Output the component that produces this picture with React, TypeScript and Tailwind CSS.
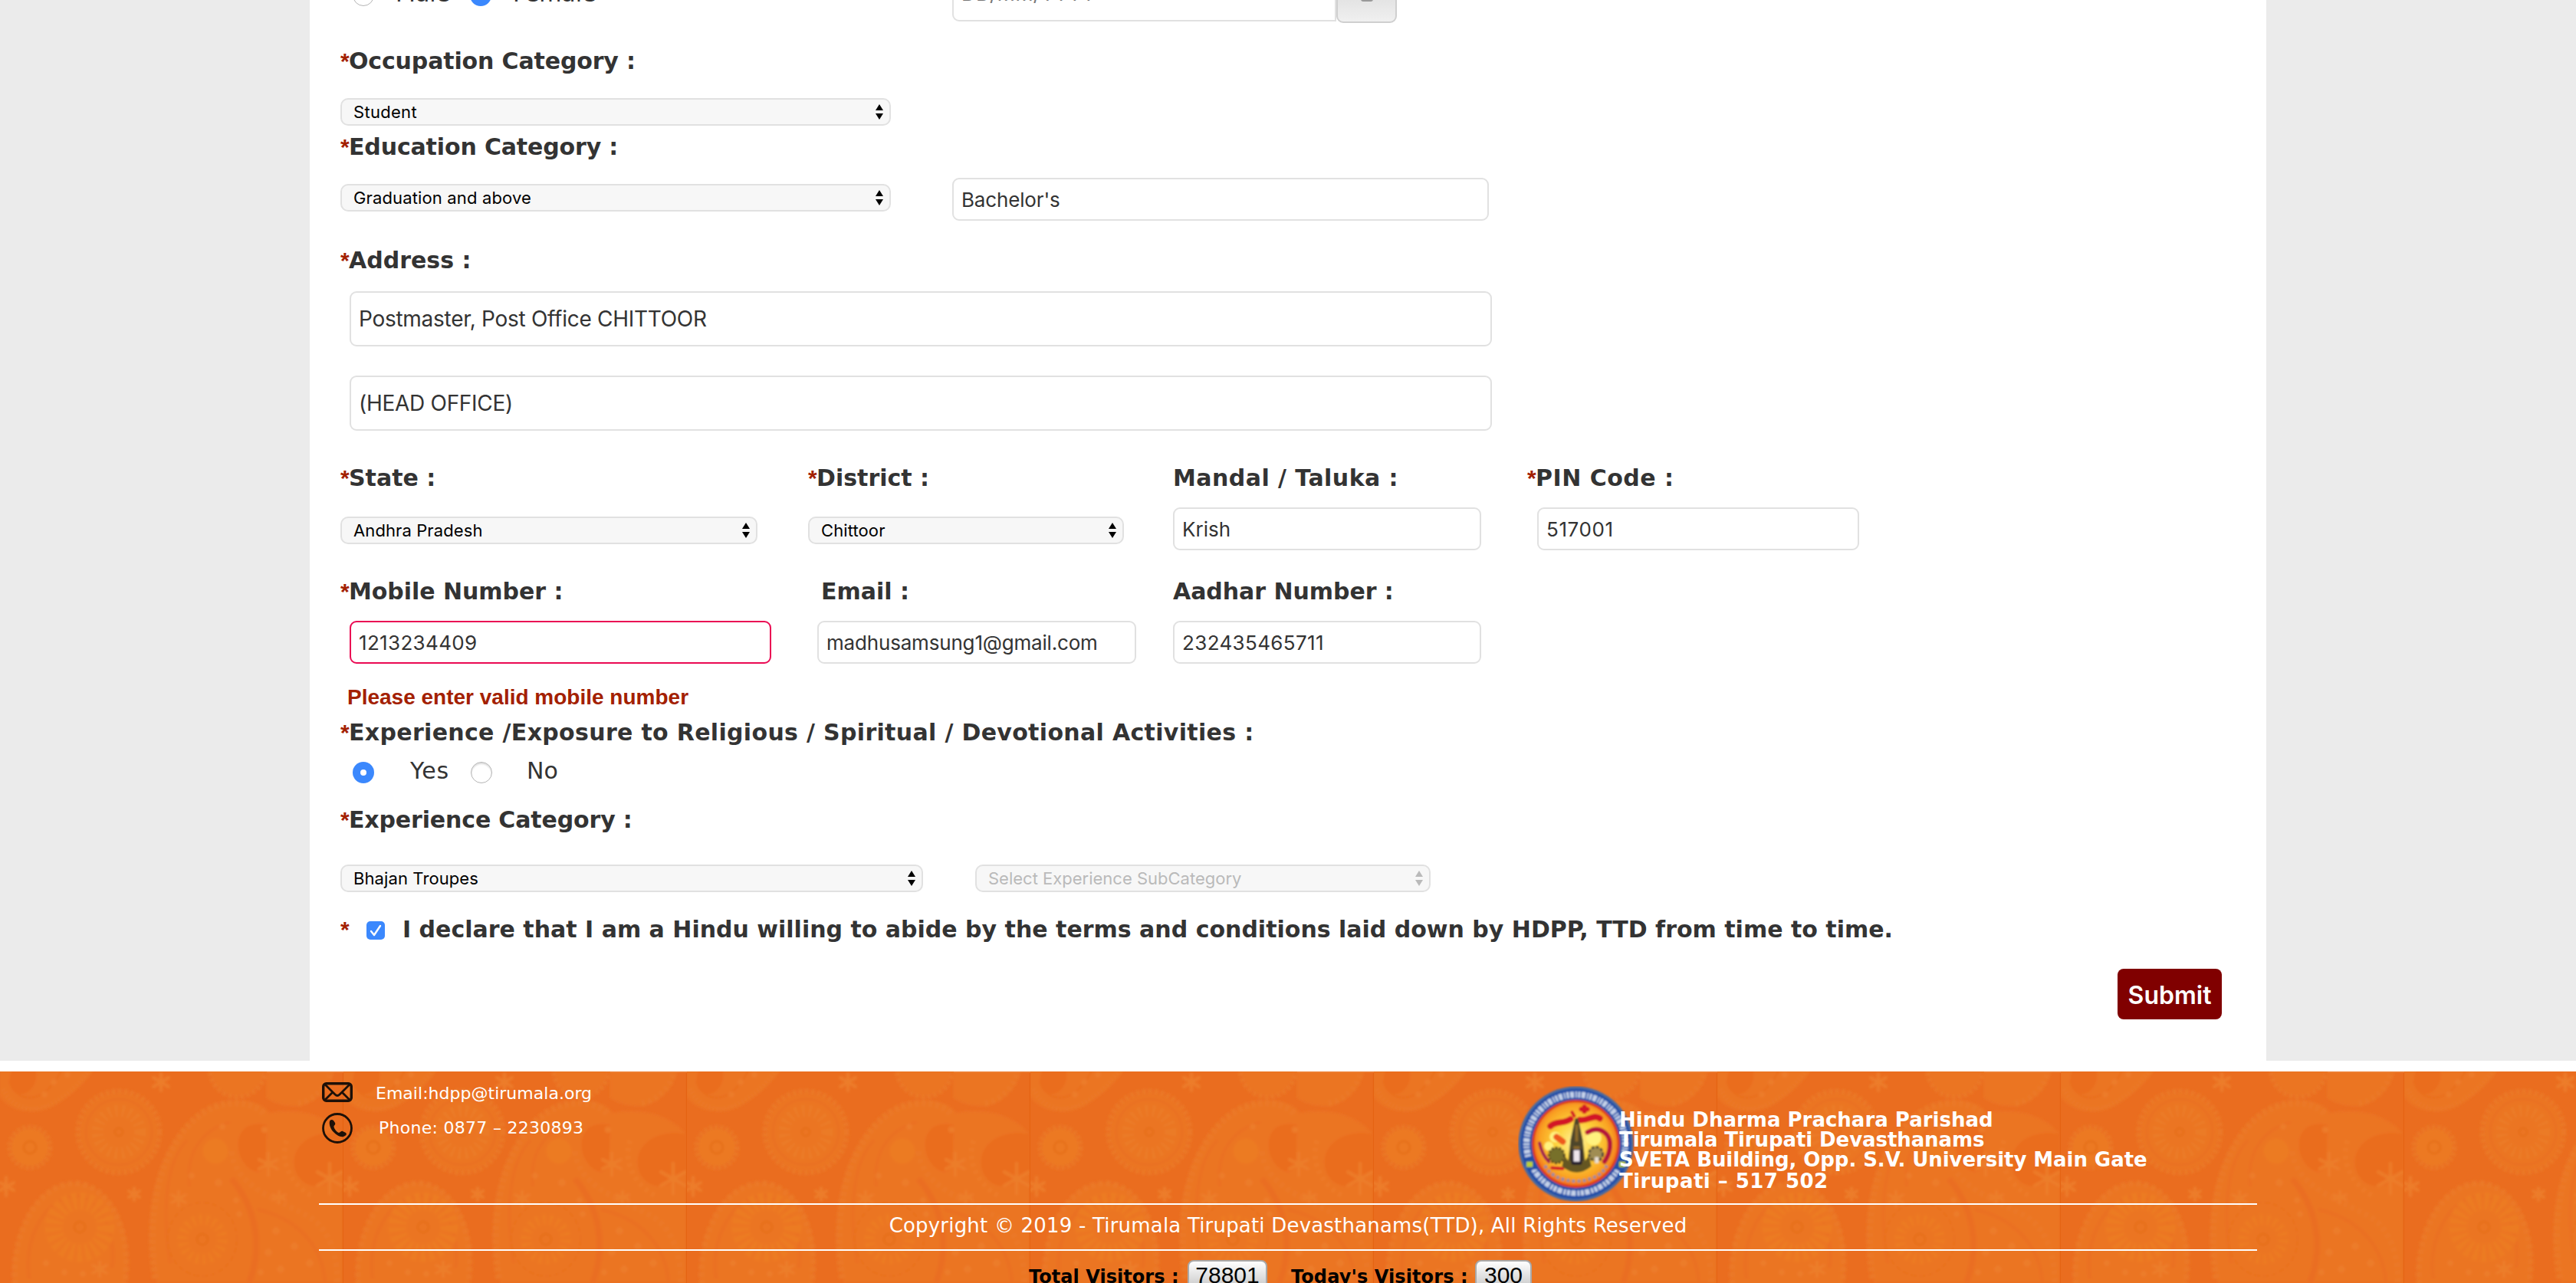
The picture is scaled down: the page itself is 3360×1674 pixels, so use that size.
import type { ReactNode } from 'react';

const labelFont = "font-['DejaVu_Sans',sans-serif]";

function Label({ children, required = false, className = '' }: { children: ReactNode; required?: boolean; className?: string }) {
  return (
    <div className={`${labelFont} flex h-9 items-start whitespace-nowrap text-[30px] leading-9 font-bold text-[#333] ${className}`}>
      {required && <Star />}
      <span>{children}</span>
    </div>
  );
}

function Star() {
  return <span className="w-[11px] shrink-0 font-['Liberation_Sans',sans-serif] text-[30px] leading-9 font-bold text-[#a32000]">*</span>;
}

function SelectBox({ children, disabled = false, className = '' }: { children: ReactNode; disabled?: boolean; className?: string }) {
  return (
    <div
      className={`flex h-9 items-center justify-between rounded-[10px] border-2 border-[#e1e1e1] bg-[#f7f7f7] pr-2 pl-[15px] font-[Inter,sans-serif] text-[22px] leading-none whitespace-nowrap ${disabled ? 'text-[#bababa]' : 'text-black'} ${className}`}
    >
      <span>{children}</span>
      <svg className="h-5 w-[10px]" viewBox="0 0 10 20" fill="currentColor">
        <path d="M5 0L10 8H0zM0 12h10L5 20z" />
      </svg>
    </div>
  );
}

function TextBox({ children, invalid = false, tall = false, className = '' }: { children: ReactNode; invalid?: boolean; tall?: boolean; className?: string }) {
  return (
    <div
      className={`flex items-center rounded-[9px] border-2 bg-white pl-[10px] font-[Inter,sans-serif] whitespace-nowrap text-[#333] ${tall ? 'h-[72px] text-[28px]' : 'h-14 text-[26px]'} ${invalid ? 'border-[#ea0a53]' : 'border-[#e1e1e1]'} ${className}`}
    >
      <span>{children}</span>
    </div>
  );
}

function Radio({ checked = false }: { checked?: boolean }) {
  return checked ? (
    <span className="mt-[6px] flex size-7 shrink-0 items-center justify-center rounded-full bg-[#3b88fd]">
      <span className="size-2 rounded-full bg-white" />
    </span>
  ) : (
    <span className="mt-[6px] size-7 shrink-0 rounded-full border border-[#b4b4b4] bg-white shadow-[inset_0_2px_2px_#ddd]" />
  );
}

function PaisleyBackground() {
  return (
    <svg className="absolute inset-0 h-full w-full" aria-hidden="true">
      <defs>
        <filter id="soft" x="0" y="0" width="100%" height="100%">
          <feGaussianBlur stdDeviation="1.8" />
        </filter>
        <pattern id="paisley" width="448" height="276" patternUnits="userSpaceOnUse">
          <rect width="448" height="276" fill="#ea6d1f" />
          <g filter="url(#soft)" stroke="#eb7926" fill="#eb7523" opacity="0.9">
            <g strokeWidth="5">
              <path d="M-2 30C10 52 42 58 70 44C96 30 116 10 126 -8H-2Z" stroke="none" />
              <path d="M4 22C16 50 46 56 72 40C96 26 112 6 120 -8" fill="none" strokeWidth="7" strokeDasharray="3 2" />
              <path d="M12 12C22 38 44 40 62 24C74 12 80 0 82 -8" fill="none" stroke="#e9701f" strokeWidth="3" />
              <ellipse cx="30" cy="8" rx="17" ry="22" transform="rotate(18 30 8)" fill="#ea6d1f" stroke="none" />
            </g>
            <circle cx="155" cy="79" r="51" stroke="none" />
            <circle cx="155" cy="79" r="53" fill="none" strokeWidth="7" strokeDasharray="5 3" />
            <circle cx="155" cy="79" r="43" fill="none" stroke="#e9701f" strokeWidth="2" />
            <circle cx="155" cy="79" r="28" fill="none" stroke="#eb7c25" strokeWidth="16" strokeDasharray="5 4" />
            <circle cx="155" cy="79" r="5" fill="none" stroke="#e67018" strokeWidth="3" />
            <circle cx="39" cy="99" r="24" stroke="none" fill="#ec7a22" />
            <circle cx="39" cy="99" r="26" fill="none" strokeWidth="7" strokeDasharray="4 3" />
            <circle cx="39" cy="99" r="8" fill="none" stroke="#e67018" strokeWidth="3" />
            <circle cx="310" cy="-3" r="34" />
            <circle cx="310" cy="-3" r="36" fill="none" strokeWidth="6" strokeDasharray="5 3" />
            <path d="M348 -6H436C432 18 416 38 392 44C372 46 356 40 348 34Z" />
            <path d="M430 4C424 24 408 38 388 42" fill="none" strokeWidth="8" strokeDasharray="5 4" />
            <path d="M205 276C184 200 196 98 268 52C300 32 336 34 352 54C390 46 430 58 448 84V276Z" stroke="none" />
            <path d="M203 270C190 190 206 98 262 56C290 36 330 36 346 58" fill="none" strokeWidth="9" strokeDasharray="6 3" />
            <path d="M247 150C242 108 262 76 300 66" fill="none" stroke="#ea6f20" strokeWidth="3" />
            <path d="M222 250C212 190 214 120 244 90" fill="none" stroke="#ea6f20" strokeWidth="3" />
            <path d="M348 70C316 62 304 88 314 112C324 132 340 136 346 124Z" fill="#ea6d1f" stroke="none" />
            <path d="M448 82C420 76 390 86 384 112C380 138 402 156 424 148L448 128Z" fill="#ea6d1f" stroke="none" />
            <path d="M302 104C306 150 360 166 404 190C430 206 440 240 440 276" fill="none" strokeWidth="8" strokeDasharray="6 4" />
            <path d="M325 276C344 224 332 176 302 140" fill="none" stroke="#ea6e20" strokeWidth="8" />
            <path d="M336 180C380 190 420 220 424 276" fill="none" stroke="#ea6f20" strokeWidth="4" />
            <path d="M374 90C366 112 374 146 410 164" fill="none" stroke="#ec7b27" strokeWidth="7" strokeDasharray="5 5" />
            <circle cx="281" cy="104" r="17" fill="#ec7b21" stroke="none" />
            <ellipse cx="264" cy="219" rx="45" ry="48" fill="none" stroke="#e9721f" strokeWidth="3" strokeDasharray="8 3" />
            <circle cx="264" cy="219" r="26" fill="none" stroke="#ec7c22" strokeWidth="14" strokeDasharray="5 4" />
            <circle cx="264" cy="219" r="7" fill="none" stroke="#e67018" strokeWidth="3" />
            <path d="M18 280C14 226 38 146 98 146C154 150 174 222 162 280Z" />
            <path d="M20 278C14 224 42 148 98 146C150 150 172 220 162 278" fill="none" strokeWidth="8" strokeDasharray="6 4" />
            <path d="M38 270C30 220 58 164 100 162C136 168 152 220 146 256" fill="none" stroke="#ea6f20" strokeWidth="4" />
            <circle cx="104" cy="203" r="34" fill="none" stroke="#ec7b23" strokeWidth="24" strokeDasharray="7 3" />
            <circle cx="104" cy="203" r="7" fill="none" stroke="#e67018" strokeWidth="3" />
            <g fill="none" stroke="#ed7e2a" strokeWidth="4" strokeLinecap="round">
              <path d="M210 3V25M200 8L220 20M200 20L220 8" />
              <path d="M8 138V162M0 145L18 155M0 155L18 145" />
              <path d="M175 152V168M168 156L182 164M168 164L182 156" />
              <path d="M430 120V160M414 131L446 149M414 149L446 131" />
              <path d="M350 106V136M338 115L362 127M338 127L362 115" />
              <path d="M233 156V176M224 161L242 171M224 171L242 161" />
              <path d="M364 156V172M356 161L372 167M356 167L372 161" />
              <path d="M130 248V268M121 253L139 263M121 263L139 253" />
            </g>
            <g fill="#ec7d29" stroke="none">
              <circle cx="285" cy="145" r="5" /><circle cx="308" cy="168" r="4" /><circle cx="290" cy="72" r="4" />
              <circle cx="345" cy="76" r="4" /><circle cx="312" cy="186" r="4" /><circle cx="250" cy="136" r="4" />
              <circle cx="360" cy="208" r="5" /><circle cx="384" cy="228" r="5" /><circle cx="350" cy="236" r="5" />
              <circle cx="404" cy="250" r="5" /><circle cx="366" cy="258" r="5" /><circle cx="340" cy="262" r="4" />
              <circle cx="70" cy="14" r="4" /><circle cx="58" cy="30" r="4" /><circle cx="88" cy="4" r="4" />
              <circle cx="60" cy="250" r="4" /><circle cx="84" cy="262" r="4" /><circle cx="108" cy="264" r="4" />
            </g>
          </g>
          <path d="M447.5 2V276" stroke="#e4600f" strokeWidth="1.5" opacity="0.8" />
          <path d="M348 0H448" stroke="#ee8a45" strokeWidth="3" opacity="0.6" />
        </pattern>
      </defs>
      <rect width="100%" height="100%" fill="url(#paisley)" />
    </svg>
  );
}

function MailIcon() {
  return (
    <svg className="h-[26px] w-10 shrink-0" viewBox="0 0 40 26" fill="none" stroke="#1d1008" strokeWidth="3.4" strokeLinejoin="round">
      <rect x="1.7" y="1.7" width="36.6" height="22.6" rx="4" />
      <path d="M4 3L17 16Q20 19 23 16L36 3M4 23L14 13M36 23L26 13" strokeWidth="2.8" />
    </svg>
  );
}

function PhoneIcon() {
  return (
    <svg className="size-10 shrink-0" viewBox="0 0 40 40">
      <circle cx="20" cy="20" r="18.5" fill="none" stroke="#1d1008" strokeWidth="2.8" />
      <path
        d="M10 11C9 15 11 21 15 25C19 29 24 32 28 31C31 30 33 28 31 26L27 24C25 23 24 26 22 26C19 25 16 21 15.500 18C15.500 16 18 16 17 13L15 10C13 8 10.500 9 10 11Z"
        fill="#1d1008"
      />
    </svg>
  );
}

function Emblem() {
  return (
    <svg className="size-[151px] shrink-0" viewBox="0 0 150 150">
      <defs>
        <radialGradient id="glow" cx="50%" cy="48%" r="55%">
          <stop offset="0" stopColor="#fff3a0" />
          <stop offset="0.45" stopColor="#fdd23a" />
          <stop offset="0.8" stopColor="#f9a022" />
          <stop offset="1" stopColor="#ee5a1c" />
        </radialGradient>
        <filter id="emblemSoft">
          <feGaussianBlur stdDeviation="0.9" />
        </filter>
      </defs>
      <g filter="url(#emblemSoft)">
        <circle cx="75" cy="75" r="74.500" fill="#4a6aa2" />
        <circle cx="75" cy="75" r="71.500" fill="#2450a8" />
        <path d="M13.200 91.700A64 64 0 1 1 136.800 91.700" fill="none" stroke="#c3d0e8" strokeWidth="8" strokeDasharray="3 1.500 5 2 2 1.500" />
        <path d="M20.200 108A64 64 0 0 0 129.800 108" fill="none" stroke="#c3d0e8" strokeWidth="7" strokeDasharray="4 1.500 6 2 3 1.500" />
        <path d="M8 94L24 94L26 108H12Z M142 94L126 94L124 108H138Z" fill="#2450a8" />
        <rect x="11" y="98" width="8" height="7" fill="#b9cf3a" />
        <rect x="131" y="98" width="8" height="7" fill="#b9cf3a" />
        <circle cx="75" cy="75" r="57" fill="#dc3a1e" />
        <circle cx="75" cy="75" r="54" fill="url(#glow)" />
        <g fill="#fff27e">
          <circle cx="98" cy="67" r="10" />
          <circle cx="48" cy="66" r="7" />
          <circle cx="40" cy="78" r="6" />
        </g>
        <g fill="none" stroke="#d31426" strokeLinecap="round">
          <path d="M42 52C50 44 58 50 68 43" strokeWidth="8" />
          <path d="M80 44C90 46 98 36 106 42" strokeWidth="8" />
          <path d="M82 30H90M86 27V33" strokeWidth="6" />
          <path d="M70 34L73 39" strokeWidth="4" />
          <path d="M90 60C106 50 121 62 119 80C118 88 115 94 112 98" stroke="#b5173a" strokeWidth="6" />
          <path d="M50 66L58 72" stroke="#ee5a1c" strokeWidth="8" />
          <path d="M28 74C30 84 34 92 40 98" stroke="#a01c50" strokeWidth="4" />
          <path d="M44 106L58 107" strokeWidth="4" />
        </g>
        <path d="M35 103C48 130 102 130 115 103" fill="none" stroke="#9a8ba0" strokeWidth="4" strokeDasharray="4 3" />
        <path d="M74 42H78L84 70L87 98H65L68 70Z" fill="#4d452c" />
        <path d="M76 50V72M72 80H80" stroke="#8d6a2c" strokeWidth="4" />
        <path d="M60 90L66 98H86L92 90L95 104Q76 120 57 104Z" fill="#655722" />
        <circle cx="50" cy="90" r="10" fill="#77702a" stroke="#5a4a24" strokeWidth="3" strokeDasharray="3 2" />
        <circle cx="101" cy="88" r="9" fill="#a08d52" stroke="#4d4638" strokeWidth="3" strokeDasharray="4 2" />
        <path d="M102 92V100" stroke="#e9e0d4" strokeWidth="5" />
        <rect x="69" y="82" width="14" height="20" rx="3" fill="#221c2c" />
        <path d="M72 83H80V98H72Z" fill="#eee6ec" />
      </g>
    </svg>
  );
}

function Counter({ children, className = '' }: { children: ReactNode; className?: string }) {
  return (
    <span
      className={`flex h-[46px] justify-center rounded-lg border-2 border-[#a9a9a9] bg-linear-to-b from-white to-[#bdbdbd] pt-[3px] font-['Liberation_Sans',sans-serif] text-[30px] leading-[30px] font-normal text-black ${className}`}
    >
      {children}
    </span>
  );
}

export default function App() {
  return (
    <div className="flex h-[1674px] w-[3360px] flex-col overflow-hidden bg-white">
      <div className="flex h-[1384px] shrink-0 justify-center bg-[#ebebeb]">
        <main className="flex h-full w-[2552px] flex-col bg-white pl-10">
          <div className={`flex h-[30px] shrink-0 items-end ${labelFont} text-[30px] leading-9 text-[#333]`}>
            <div className="flex h-14 w-[798px] items-start pl-4">
              <Radio />
              <span className="ml-7">Male</span>
              <span className="ml-[26px] flex">
                <Radio checked />
              </span>
              <span className="ml-7">Female</span>
            </div>
            <div className="flex items-end">
              <div className="mb-[2px] flex h-[72px] w-[501px] items-center rounded-l-[9px] border-2 border-[#e1e1e1] pl-[10px] font-[Inter,sans-serif] text-[26px] tracking-[0.2px] text-[#777]">
                DD/MM/YYYY
              </div>
              <div className="flex h-[60px] w-[79px] items-center justify-center rounded-[9px] border-2 border-[#cfcfcf] bg-linear-to-b from-[#d8d8d8] to-[#f0f0f0]">
                <svg className="size-4" viewBox="0 0 16 16" fill="#999">
                  <rect width="16" height="11" y="-1" rx="3" />
                </svg>
              </div>
            </div>
          </div>

          <Label required className="mt-8 tracking-[-0.150px]">Occupation Category :</Label>
          <SelectBox className="mt-[30px] w-[718px]"><span className="tracking-[0.300px]">Student</span></SelectBox>

          <Label required className="mt-[10px] tracking-[-0.150px]">Education Category :</Label>
          <div className="mt-[22px] flex h-14 items-start">
            <SelectBox className="mt-2 w-[718px]"><span className="tracking-[0.141px]">Graduation and above</span></SelectBox>
            <TextBox className="ml-20 w-[700px] tracking-[-0.160px]">Bachelor&apos;s</TextBox>
          </div>

          <Label required className="mt-[34px]">Address :</Label>
          <TextBox tall className="mt-[22px] ml-3 w-[1490px] tracking-[-0.281px]">Postmaster, Post Office CHITTOOR</TextBox>
          <TextBox tall className="mt-[38px] ml-3 w-[1490px] tracking-[-0.290px]">(HEAD OFFICE)</TextBox>

          <div className="mt-11 grid grid-cols-[610px_476px_462px_1fr]">
            <Label required>State :</Label>
            <Label required>District :</Label>
            <Label className="tracking-[0.450px]">Mandal / Taluka :</Label>
            <Label required className="tracking-[0.500px]">PIN Code :</Label>
          </div>
          <div className="mt-5 grid h-14 grid-cols-[610px_476px_463px_1fr] items-start">
            <SelectBox className="mt-3 w-[544px]"><span className="tracking-[0.100px]">Andhra Pradesh</span></SelectBox>
            <SelectBox className="mt-3 w-[412px]"><span className="tracking-[0.100px]">Chittoor</span></SelectBox>
            <TextBox className="w-[402px]">Krish</TextBox>
            <TextBox className="ml-3 w-[420px] tracking-[0.600px]">517001</TextBox>
          </div>

          <div className="mt-9 grid grid-cols-[610px_476px_462px_1fr]">
            <Label required className="tracking-[-0.050px]">Mobile Number :</Label>
            <Label className="pl-[17px]">Email :</Label>
            <Label className="tracking-[-0.050px]">Aadhar Number :</Label>
          </div>
          <div className="mt-5 grid h-14 grid-cols-[610px_476px_462px_1fr]">
            <TextBox invalid className="ml-3 w-[550px] tracking-[0.336px]">1213234409</TextBox>
            <TextBox className="ml-3 w-[416px] tracking-[-0.180px]">madhusamsung1@gmail.com</TextBox>
            <TextBox className="w-[402px] tracking-[0.360px]">232435465711</TextBox>
          </div>

          <p className="mt-[26px] h-9 pl-[9px] font-['Liberation_Sans',sans-serif] text-[28px] leading-9 font-bold text-[#a32000]">
            Please enter valid mobile number
          </p>

          <Label required className="mt-[10px] tracking-[0.320px]">
            Experience /Exposure to Religious / Spiritual / Devotional Activities :
          </Label>
          <div className={`mt-[14px] flex h-9 items-start pl-4 ${labelFont} text-[30px] leading-9 text-[#333]`}>
            <Radio checked />
            <span className="ml-[47px] w-[79px] tracking-[0.800px]">Yes</span>
            <Radio />
            <span className="ml-[45px]">No</span>
          </div>

          <Label required className="mt-7 tracking-[-0.150px]">Experience Category :</Label>
          <div className="mt-10 flex gap-[68px]">
            <SelectBox className="w-[760px]"><span className="tracking-[0.100px]">Bhajan Troupes</span></SelectBox>
            <SelectBox disabled className="w-[594px]">Select Experience SubCategory</SelectBox>
          </div>

          <div className="mt-[31px] flex h-9 items-start">
            <Star />
            <span className="mt-[7px] ml-[23px] flex size-6 items-center justify-center rounded-[5px] bg-[#3b88fd]">
              <svg className="size-4" viewBox="0 0 16 16" fill="none" stroke="#fff" strokeWidth="2.4" strokeLinecap="round" strokeLinejoin="round">
                <path d="M2 9L6 14L14 2" />
              </svg>
            </span>
            <Label className="ml-[23px]">
              I declare that I am a Hindu willing to abide by the terms and conditions laid down by HDPP, TTD from time to time.
            </Label>
          </div>

          <button
            type="button"
            className="mt-[33px] mr-[58px] flex h-[66px] w-[136px] items-center justify-center self-end rounded-lg bg-[#800000] pt-[4px] font-[Inter,sans-serif] text-[32px] font-semibold text-white"
          >
            Submit
          </button>
        </main>
      </div>

      <footer className={`relative mt-[14px] h-[276px] shrink-0 overflow-hidden ${labelFont}`}>
        <PaisleyBackground />
        <div className="relative mx-[416px]">
          <div className="flex h-[172px] pl-1 text-white">
            <div className="w-[1560px] pt-[14px] text-[22px] leading-7">
              <div className="flex h-10 items-start">
                <MailIcon />
                <span className="mt-px ml-[30px] tracking-[0.020px]">Email:hdpp@tirumala.org</span>
              </div>
              <div className="flex h-10 items-start">
                <PhoneIcon />
                <span className="mt-[6px] ml-[34px] tracking-[0.280px]">Phone: 0877 – 2230893</span>
              </div>
            </div>
            <div className="-mt-px pt-5">
              <Emblem />
            </div>
            <div className="relative -ml-[19px] pt-[50px] text-[26px] leading-[26px] font-bold whitespace-nowrap">
              <p>Hindu Dharma Prachara Parishad</p>
              <p className="tracking-[-0.085px]">Tirumala Tirupati Devasthanams</p>
              <p className="tracking-[-0.061px]">SVETA Building, Opp. S.V. University Main Gate</p>
              <p className="mt-[2px] tracking-[0.466px]">Tirupati – 517 502</p>
            </div>
          </div>
          <div className="flex h-[62px] items-center justify-center border-y-2 border-white pb-1 text-[26px] tracking-[0.195px] whitespace-nowrap text-white">
            Copyright © 2019 - Tirumala Tirupati Devasthanams(TTD), All Rights Reserved
          </div>
          <div className="flex items-start justify-start pt-3 pl-[926px] text-2xl leading-7 font-bold whitespace-nowrap text-black">
            <span className="mt-2 w-[207px] tracking-[0.050px]">Total Visitors :</span>
            <Counter className="w-[104px]">78801</Counter>
            <span className="mt-2 ml-[31px] w-[240px] tracking-[0.100px]">Today&apos;s Visitors :</span>
            <Counter className="w-[74px]">300</Counter>
          </div>
        </div>
      </footer>
    </div>
  );
}
